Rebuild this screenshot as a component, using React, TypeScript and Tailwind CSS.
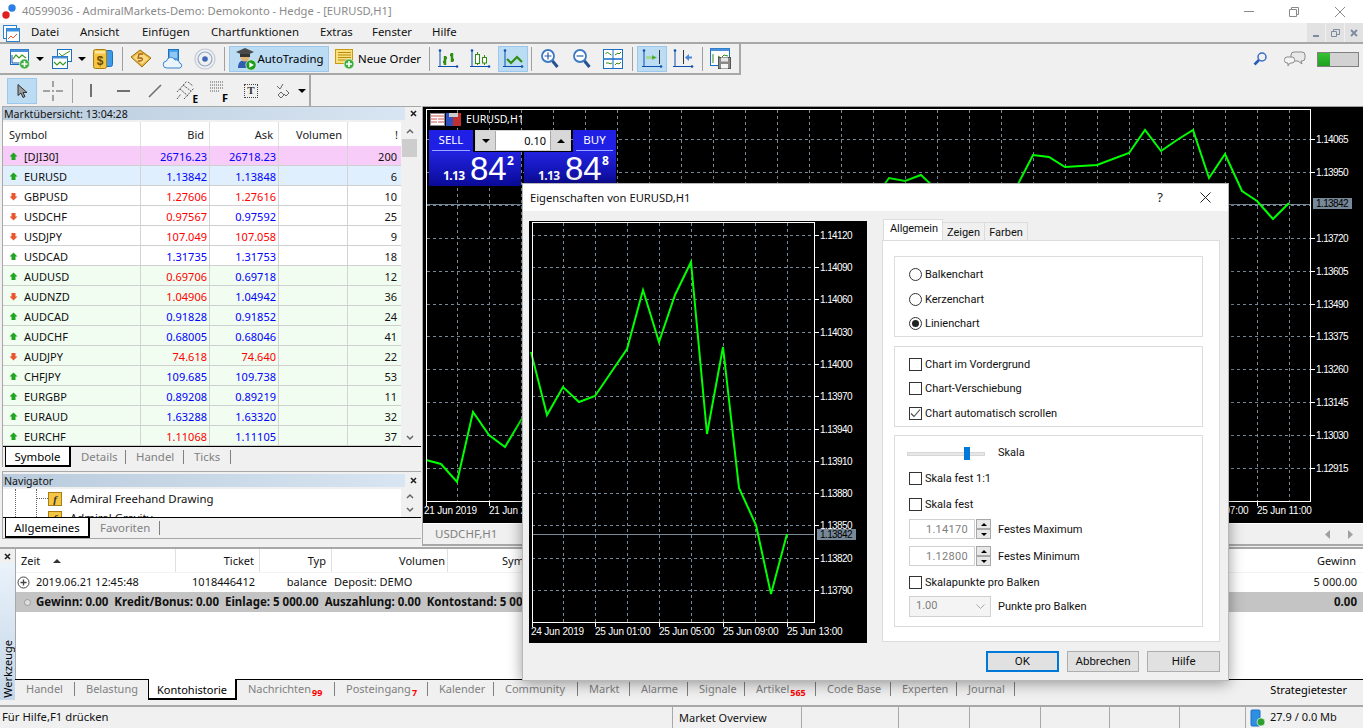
import type { ReactNode } from 'react'

const marketRows = [
  { s: '[DJI30]', up: true, bid: '26716.23', bc: 'b', ask: '26718.23', ac: 'b', n: 200, bg: 'bg-[#f8ccf8]' },
  { s: 'EURUSD', up: true, bid: '1.13842', bc: 'b', ask: '1.13848', ac: 'b', n: 6, bg: 'bg-[#dfeffd]' },
  { s: 'GBPUSD', up: false, bid: '1.27606', bc: 'r', ask: '1.27616', ac: 'r', n: 10, bg: 'bg-white' },
  { s: 'USDCHF', up: false, bid: '0.97567', bc: 'r', ask: '0.97592', ac: 'b', n: 25, bg: 'bg-white' },
  { s: 'USDJPY', up: false, bid: '107.049', bc: 'r', ask: '107.058', ac: 'r', n: 9, bg: 'bg-white' },
  { s: 'USDCAD', up: true, bid: '1.31735', bc: 'b', ask: '1.31753', ac: 'b', n: 18, bg: 'bg-white' },
  { s: 'AUDUSD', up: true, bid: '0.69706', bc: 'r', ask: '0.69718', ac: 'b', n: 12, bg: 'bg-[#f0fdf0]' },
  { s: 'AUDNZD', up: false, bid: '1.04906', bc: 'r', ask: '1.04942', ac: 'b', n: 36, bg: 'bg-[#f0fdf0]' },
  { s: 'AUDCAD', up: true, bid: '0.91828', bc: 'b', ask: '0.91852', ac: 'b', n: 24, bg: 'bg-[#f0fdf0]' },
  { s: 'AUDCHF', up: true, bid: '0.68005', bc: 'b', ask: '0.68046', ac: 'b', n: 41, bg: 'bg-[#f0fdf0]' },
  { s: 'AUDJPY', up: false, bid: '74.618', bc: 'r', ask: '74.640', ac: 'r', n: 22, bg: 'bg-[#f0fdf0]' },
  { s: 'CHFJPY', up: true, bid: '109.685', bc: 'b', ask: '109.738', ac: 'b', n: 53, bg: 'bg-[#f0fdf0]' },
  { s: 'EURGBP', up: true, bid: '0.89208', bc: 'b', ask: '0.89219', ac: 'b', n: 11, bg: 'bg-[#f0fdf0]' },
  { s: 'EURAUD', up: true, bid: '1.63288', bc: 'b', ask: '1.63320', ac: 'b', n: 32, bg: 'bg-[#f0fdf0]' },
  { s: 'EURCHF', up: true, bid: '1.11068', bc: 'r', ask: '1.11105', ac: 'b', n: 37, bg: 'bg-[#f0fdf0]' },
]

const menuItems = [
  { t: 'Datei', w: 'w-[49px]' },
  { t: 'Ansicht', w: 'w-[62px]' },
  { t: 'Einfügen', w: 'w-[69px]' },
  { t: 'Chartfunktionen', w: 'w-[109px]' },
  { t: 'Extras', w: 'w-[52px]' },
  { t: 'Fenster', w: 'w-[60px]' },
  { t: 'Hilfe', w: 'w-[40px]' },
]

const terminalTabs = [
  { t: 'Handel', w: 'w-[60px]', sep: true },
  { t: 'Belastung', w: 'w-[73px]', sep: false },
  { t: 'Kontohistorie', w: 'w-[89px]', active: true, sep: false },
  { t: 'Nachrichten', w: 'w-[98px]', sep: true, badge: '99' },
  { t: 'Posteingang', w: 'w-[93px]', sep: true, badge: '7' },
  { t: 'Kalender', w: 'w-[66px]', sep: true },
  { t: 'Community', w: 'w-[84px]', sep: true },
  { t: 'Markt', w: 'w-[52px]', sep: true },
  { t: 'Alarme', w: 'w-[58px]', sep: true },
  { t: 'Signale', w: 'w-[57px]', sep: true },
  { t: 'Artikel', w: 'w-[71px]', sep: true, badge: '565' },
  { t: 'Code Base', w: 'w-[75px]', sep: true },
  { t: 'Experten', w: 'w-[66px]', sep: true },
  { t: 'Journal', w: 'w-[58px]', sep: true },
]

const mainPrices = [
  [139, '1.14065'], [172, '1.13950'], [238, '1.13720'], [271, '1.13605'], [304, '1.13490'],
  [336, '1.13375'], [369, '1.13260'], [402, '1.13145'], [435, '1.13030'], [468, '1.12915'],
] as const

const dlgPrices = [
  [235, '1.14120'], [267, '1.14090'], [299, '1.14060'], [332, '1.14030'], [364, '1.14000'], [396, '1.13970'],
  [429, '1.13940'], [461, '1.13910'], [493, '1.13880'], [525, '1.13850'], [558, '1.13820'], [590, '1.13790'],
] as const

const mainVerticals = Array.from({ length: 27 }, (_, i) => 457 + i * 32)
const dlgVerticals = [563, 595, 627, 659, 691, 723, 755, 787]

function Axes({ children }: { children?: ReactNode }) {
  return (
    <svg width="22" height="20" viewBox="0 0 22 20">
      <path d="M3 1v17M1 17.5h19" stroke="#0a4fb0" strokeWidth="1" fill="none" />
      <circle cx="3" cy="1.5" r="1.3" fill="#0a4fb0" />
      <circle cx="20" cy="17.5" r="1.3" fill="#0a4fb0" />
      {children}
    </svg>
  )
}

function PlusBadge({ x, y }: { x: number; y: number }) {
  return (
    <g>
      <circle cx={x} cy={y} r="5" fill="#3fae3f" stroke="#dff3df" strokeWidth="0.7" />
      <path d={`M${x - 3} ${y}h6M${x} ${y - 3}v6`} stroke="#fff" strokeWidth="1.6" />
    </g>
  )
}

function NewChartIcon() {
  return (
    <svg width="22" height="22" viewBox="0 0 22 22">
      <rect x="1.5" y="1.5" width="18" height="15" fill="#fff" stroke="#1b6fc2" />
      <rect x="1.5" y="1.5" width="18" height="2.5" fill="#4a90d9" />
      <path d="M3 7v8h13" stroke="#0a4fb0" fill="none" />
      <path d="M4 11l3-4 3 3 3-3 4 3" stroke="#3a9a1a" fill="none" strokeWidth="1.2" />
      <PlusBadge x={15.5} y={16} />
    </svg>
  )
}

function ProfilesIcon() {
  return (
    <svg width="22" height="22" viewBox="0 0 22 22">
      <rect x="6.5" y="1.5" width="14" height="12" fill="#fff" stroke="#1b6fc2" />
      <path d="M8 5l3 3 3-2 5-3" stroke="#3a9a1a" fill="none" />
      <rect x="1.5" y="8.5" width="15" height="12" fill="#fff" stroke="#1b6fc2" />
      <rect x="1.5" y="8.5" width="15" height="2" fill="#4a90d9" />
      <path d="M3 14l3 3 3-3 3 3 3-3" stroke="#3a9a1a" fill="none" strokeWidth="1.2" />
    </svg>
  )
}

function DollarIcon() {
  return (
    <svg width="22" height="22" viewBox="0 0 22 22">
      <rect x="7.5" y="2.5" width="13" height="16" rx="2" fill="#3d9be9" stroke="#1b6fc2" />
      <rect x="1.5" y="1.5" width="13" height="19" rx="2" fill="#f4c542" stroke="#a87e10" />
      <rect x="3" y="3" width="10" height="2.5" fill="#fbe7a2" />
      <text x="8" y="17" textAnchor="middle" fontSize="12" fontWeight="700" fill="#6b4c00" fontFamily="Liberation Sans">$</text>
    </svg>
  )
}

function BookIcon() {
  return (
    <svg width="22" height="20" viewBox="0 0 22 20">
      <path d="M1 8L10 1l11 8-9 9z" fill="#e8b034" stroke="#9c7416" />
      <path d="M3 8.5l7-5.5 9 6.5-7 6z" fill="#f7da84" />
      <path d="M13 5H9l-1 4h3c2 0 2 3-1 3H8" stroke="#a8601a" strokeWidth="1.3" fill="none" />
    </svg>
  )
}

function CloudDocIcon() {
  return (
    <svg width="22" height="22" viewBox="0 0 22 22">
      <rect x="6.5" y="1.5" width="10" height="12" fill="#4aa3e8" stroke="#1b6fc2" />
      <path d="M8 5h7M8 7h7M8 9h7" stroke="#d8ecfb" />
      <path d="M5 20a3.5 3.5 0 0 1-.5-7 4.5 4.5 0 0 1 8.5-1 3.5 3.5 0 0 1 4.5 3 2.6 2.6 0 0 1 .5 5z" fill="#eaf4fc" stroke="#3b82c8" />
    </svg>
  )
}

function SignalIcon() {
  return (
    <svg width="22" height="22" viewBox="0 0 22 22" fill="none">
      <circle cx="11" cy="11" r="10" stroke="#c3cbd6" strokeWidth="1.2" />
      <circle cx="11" cy="11" r="7" stroke="#8fa6c7" strokeWidth="1.2" />
      <circle cx="11" cy="11" r="2.8" fill="#3b68b8" />
    </svg>
  )
}

function AutoTradingIcon() {
  return (
    <svg width="22" height="24" viewBox="0 0 22 24">
      <path d="M3 21c0-6 3-8 7-8s7 2 7 8z" fill="#2f5fae" />
      <circle cx="10" cy="10" r="4.5" fill="#e5b27a" />
      <path d="M1 5l9-4 9 4-9 4z" fill="#4a4a4a" />
      <path d="M5 7v3h10V7" fill="#333" />
      <circle cx="16" cy="18" r="5.2" fill="#1f9d1f" stroke="#e6f5e6" strokeWidth="0.7" />
      <path d="M14.3 15.2v5.6l4.6-2.8z" fill="#fff" />
    </svg>
  )
}

function OrderIcon() {
  return (
    <svg className="shrink-0" width="22" height="22" viewBox="0 0 22 22">
      <rect x="1.5" y="1.5" width="17" height="14" fill="#f9e07c" stroke="#c79a12" />
      <path d="M4 4.5h13M4 7h13M4 9.5h13M4 12h9" stroke="#b88c10" />
      <PlusBadge x={15} y={16} />
    </svg>
  )
}

function BarChartIcon() {
  return (
    <Axes>
      <path d="M8 7v9M6 13h2M8 9h2M15 4v9M13 6h2M15 11h2" stroke="#2f8f10" strokeWidth="2.4" fill="none" />
    </Axes>
  )
}

function CandleIcon() {
  return (
    <Axes>
      <rect x="6.5" y="5.5" width="4" height="9" fill="#fff" stroke="#2f8f10" />
      <path d="M8.5 3v2M8.5 15v1M15.5 6v2M15.5 14v2" stroke="#2f8f10" />
      <rect x="13.5" y="8.5" width="4" height="5.5" fill="#fff" stroke="#2f8f10" />
    </Axes>
  )
}

function LineIcon() {
  return (
    <Axes>
      <path d="M5 10l4 4 6-6 5 5" stroke="#2f8f10" strokeWidth="2.2" fill="none" />
    </Axes>
  )
}

function ZoomIcon({ plus }: { plus?: boolean }) {
  return (
    <svg width="20" height="22" viewBox="0 0 20 22" fill="none">
      <circle cx="9" cy="8" r="6" fill="#fff" stroke="#3a78c4" strokeWidth="1.8" />
      <path d={plus ? 'M5.500 8h7M9 4.500v7' : 'M5.500 8h7'} stroke="#2a5da8" strokeWidth="1.2" />
      <path d="M13.500 13l5 6" stroke="#24508f" strokeWidth="3" />
    </svg>
  )
}

function TileIcon() {
  return (
    <svg width="20" height="20" viewBox="0 0 20 20" fill="none">
      <rect x="0.5" y="0.5" width="19" height="19" fill="#fff" stroke="#1b6fc2" />
      <rect x="0.5" y="9" width="19" height="2" fill="#4a90d9" />
      <path d="M10 0v20" stroke="#1b6fc2" />
      <path d="M2.5 5l2-2 2 2 2 1M12 6l3-2 1 1 2-2M3 14h3l1 1 2-1M12 16l2-2 2 1 2-2" stroke="#2f8f10" />
    </svg>
  )
}

function AutoScrollIcon() {
  return (
    <Axes>
      <rect x="5" y="7" width="6" height="3" fill="#a3d89a" />
      <path d="M11 6l0 5 5-2.5z" fill="#5cb84c" />
      <path d="M11 8.5h3" stroke="#3d9a2b" />
      <path d="M18.5 1v14" stroke="#333" />
    </Axes>
  )
}

function ChartShiftIcon() {
  return (
    <Axes>
      <path d="M11.5 1v14" stroke="#333" />
      <path d="M20 7.5h-3V5l-4 3.5 4 3.5V9.5h3z" fill="#4a86d8" />
    </Axes>
  )
}

function TemplateIcon() {
  return (
    <svg width="22" height="22" viewBox="0 0 22 22" fill="none">
      <rect x="0.5" y="0.5" width="19" height="17" fill="#fff" stroke="#1b6fc2" />
      <rect x="0.5" y="0.5" width="19" height="2.5" fill="#4a90d9" />
      <path d="M3 6v9M8 8l3 2 3-3 4 1" stroke="#2f8f10" />
      <rect x="8.5" y="9.5" width="12" height="11" fill="#8a8a8a" stroke="#555" />
      <rect x="11" y="9.5" width="7" height="4" fill="#e5e5e5" />
      <rect x="11" y="16" width="7" height="4.500" fill="#f5f5f5" />
    </svg>
  )
}

function Arrow({ up }: { up: boolean }) {
  return (
    <svg width="9" height="9" viewBox="0 0 9 9">
      {up ? <path d="M4.5.5L8.500 4.500H6.500V8h-4V4.500H.5z" fill="#1fa51f" /> : <path d="M4.500 8.500L8.500 4.500H6.500V1h-4v3.500H.5z" fill="#e8562e" />}
    </svg>
  )
}

function Caret() {
  return <div className="w-0 h-0 border-l-[4px] border-r-[4px] border-t-[4px] border-l-transparent border-r-transparent border-t-black" />
}

function Sep() {
  return <div className="w-px h-[24px] bg-[#a0a0a0] shrink-0" />
}

function Slot({ children, w = 'w-8' }: { children?: ReactNode; w?: string }) {
  return <div className={`${w} h-[26px] flex items-center justify-center shrink-0`}>{children}</div>
}

function Active({ children, w = 'w-[30px]', ml = '' }: { children?: ReactNode; w?: string; ml?: string }) {
  return (
    <div className={`${w} ${ml} h-[26px] flex items-center justify-center shrink-0 bg-[#bcdcf4] border border-[#9cc8ee]`}>
      {children}
    </div>
  )
}

function Toolbars() {
  return (
    <div className="flex flex-col">
      <div className="h-[31px] w-[741px] flex items-center border-b-2 border-r-2 border-[#a8a8a8]">
        <Slot w="w-7 ml-[6px]"><NewChartIcon /></Slot>
        <Slot w="w-3"><Caret /></Slot>
        <Slot w="w-7 ml-[2px]"><ProfilesIcon /></Slot>
        <Slot w="w-3"><Caret /></Slot>
        <Slot w="w-7 ml-[1px]"><DollarIcon /></Slot>
        <div className="ml-[5px] shrink-0"><Sep /></div>
        <Slot w="w-8 ml-[2px]"><BookIcon /></Slot>
        <Slot><CloudDocIcon /></Slot>
        <Slot><SignalIcon /></Slot>
        <div className="ml-[3px] shrink-0"><Sep /></div>
        <Active w="w-[100px]" ml="ml-[4px]">
          <AutoTradingIcon />
          <span className="ml-[1px] text-[11.4px] text-black whitespace-nowrap">AutoTrading</span>
        </Active>
        <div className="ml-[5px] flex items-center w-[87px] shrink-0">
          <OrderIcon />
          <span className="ml-[2px] text-[11.4px] text-black whitespace-nowrap">Neue Order</span>
        </div>
        <div className="ml-[8px] shrink-0"><Sep /></div>
        <Slot w="w-8 ml-[2px]"><BarChartIcon /></Slot>
        <Slot><CandleIcon /></Slot>
        <Active ml="ml-[2px]"><LineIcon /></Active>
        <div className="ml-[3px] shrink-0"><Sep /></div>
        <Slot w="w-8 ml-[1px]"><ZoomIcon plus /></Slot>
        <Slot><ZoomIcon /></Slot>
        <Slot><TileIcon /></Slot>
        <div className="ml-[3px] shrink-0"><Sep /></div>
        <Active ml="ml-[4px]"><AutoScrollIcon /></Active>
        <Slot><ChartShiftIcon /></Slot>
        <div className="ml-[3px] shrink-0"><Sep /></div>
        <Slot w="w-8 ml-[2px]"><TemplateIcon /></Slot>
      </div>
      <div className="h-[31px] w-[311px] flex items-center border-r-2 border-[#a8a8a8]">
        <Active ml="ml-[7px]">
          <svg width="14" height="16" viewBox="0 0 14 16"><path d="M3 1.5v11l3-2.5 2 4.5 2-1-2-4h4z" fill="#9a9a9a" stroke="#333" /></svg>
        </Active>
        <Slot>
          <svg width="20" height="20" viewBox="0 0 20 20"><path d="M10 0v6M10 9v2M10 14v6M0 10h7M13 10h7" stroke="#555" /></svg>
        </Slot>
        <div className="ml-[3px] shrink-0"><Sep /></div>
        <Slot w="w-8 ml-[2px]"><div className="w-[2px] h-[13px] bg-[#707070]" /></Slot>
        <Slot><div className="w-[13px] h-[2px] bg-[#707070]" /></Slot>
        <Slot>
          <svg width="14" height="14" viewBox="0 0 14 14"><path d="M1 13L13 1" stroke="#707070" strokeWidth="1.6" /></svg>
        </Slot>
        <Slot>
          <div className="relative w-[22px] h-[22px]">
            <svg width="20" height="20" viewBox="0 0 20 20" fill="none"><path d="M1 19l4-5M1 12l10-11M8 19l10-11M4 9l8 7M7 5l8 6M12 2l5 4" stroke="#555" strokeDasharray="2 1" /></svg>
            <span className="absolute right-0 bottom-[-2px] text-[10px] leading-none font-bold text-black">E</span>
          </div>
        </Slot>
        <Slot>
          <div className="relative w-[18px] h-[20px]">
            <svg width="14" height="14" viewBox="0 0 14 14" fill="none"><path d="M0 1h13M0 4h13M0 7h13M0 10h9" stroke="#555" strokeDasharray="1 1" /></svg>
            <span className="absolute right-0 bottom-[-2px] text-[11px] leading-none font-bold text-black">F</span>
          </div>
        </Slot>
        <Slot>
          <div className="w-[14px] h-[14px] border border-dotted border-[#444] flex items-center justify-center text-[11px] leading-none font-bold font-['Liberation_Serif',serif] text-[#333]">T</div>
        </Slot>
        <Slot>
          <svg width="14" height="16" viewBox="0 0 14 16" fill="none"><path d="M1 3l3 3 3-5M5 9l3 3-3 3-3-3zM10 7l3 3-3 3-2-2" stroke="#666" /></svg>
        </Slot>
        <Slot w="w-[6px]"><Caret /></Slot>
      </div>
    </div>
  )
}

function PanelTitle({ title }: { title: string }) {
  return (
    <div className="h-[15px] flex items-start shrink-0">
      <div className="flex-1 h-[13px] bg-gradient-to-r from-[#b9cbdc] to-[#d8e5f2] pl-[1px] text-[10.6px] leading-[14px] text-[#111]">{title}</div>
      <div className="w-[16px] h-[13px] flex items-center justify-center">
        <svg width="7" height="7" viewBox="0 0 7 7"><path d="M1 1l5 5M6 1L1 6" stroke="#222" strokeWidth="1.6" /></svg>
      </div>
    </div>
  )
}

function PanelTabs({ active, activeW, items }: { active: string; activeW: string; items: { t: string; w: string }[] }) {
  return (
    <div className="h-[21px] flex border-t border-black pl-[2px] text-[11.4px] shrink-0">
      <div className={`${activeW} h-[20px] bg-white border-l border-r-2 border-b-2 border-black text-center leading-[19px] text-black`}>{active}</div>
      {items.map((it) => (
        <div key={it.t} className={`${it.w} h-[14px] mt-[3px] pl-[10px] leading-[14px] border-r border-[#808080] text-[#808080]`}>{it.t}</div>
      ))}
    </div>
  )
}

function ScrollArrow({ up }: { up: boolean }) {
  return (
    <svg width="8" height="6" viewBox="0 0 8 6" fill="none">
      <path d={up ? 'M1 5l3-3 3 3' : 'M1 1l3 3 3-3'} stroke="#666" strokeWidth="1.5" />
    </svg>
  )
}

function MarketWatch() {
  const color = (c: string) => (c === 'b' ? 'text-[#0000ff]' : 'text-[#ff0000]')
  return (
    <div className="ml-[2px] mr-[1px] flex flex-col border-l border-t border-[#a8a8a8]">
      <PanelTitle title="Marktübersicht: 13:04:28" />
      <div className="flex h-[324px]">
        <div className="w-[398px] text-[11px]">
          <div className="h-[24px] flex bg-white leading-[26px] text-[#222]">
            <div className="w-[138px] pl-[6px] border-r border-[#e0e0e0]">Symbol</div>
            <div className="w-[69px] pr-[5px] text-right border-r border-[#e0e0e0]">Bid</div>
            <div className="w-[69px] pr-[5px] text-right border-r border-[#e0e0e0]">Ask</div>
            <div className="w-[69px] pr-[5px] text-right border-r border-[#e0e0e0]">Volumen</div>
            <div className="w-[53px] pr-[3px] text-right">!</div>
          </div>
          {marketRows.map((r) => (
            <div key={r.s} className={`h-[20px] flex leading-[21px] border-b border-[#cfcfcf] ${r.bg}`}>
              <div className="w-[138px] flex items-center pl-[6px] pt-[2px] border-r border-[#d4d4d4] text-[#111]">
                <Arrow up={r.up} />
                <span className="ml-[6px] leading-[15px]">{r.s}</span>
              </div>
              <div className={`w-[69px] pr-[2px] text-right border-r border-[#d4d4d4] ${color(r.bc)}`}>{r.bid}</div>
              <div className={`w-[69px] pr-[2px] text-right border-r border-[#d4d4d4] ${color(r.ac)}`}>{r.ask}</div>
              <div className="w-[69px] border-r border-[#d4d4d4]" />
              <div className="w-[53px] pr-[4px] text-right text-[#111]">{r.n}</div>
            </div>
          ))}
        </div>
        <div className="w-[17px] flex flex-col items-center bg-[#f0f0f0]">
          <div className="h-[17px] flex items-center"><ScrollArrow up /></div>
          <div className="w-[15px] h-[18px] bg-[#cdcdcd]" />
          <div className="flex-1" />
          <div className="h-[17px] flex items-center"><ScrollArrow up={false} /></div>
        </div>
      </div>
      <PanelTabs
        active="Symbole"
        activeW="w-[66px]"
        items={[
          { t: 'Details', w: 'w-[55px]' },
          { t: 'Handel', w: 'w-[58px]' },
          { t: 'Ticks', w: 'w-[47px]' },
        ]}
      />
    </div>
  )
}

function Navigator() {
  return (
    <div className="mt-[4px] ml-[2px] mr-[1px] flex flex-col border-l border-t border-b border-[#a8a8a8] pt-[2px]">
      <PanelTitle title="Navigator" />
      <div className="flex h-[28px] overflow-hidden">
        <div className="w-[398px] bg-white text-[11.4px] relative overflow-hidden">
          <div className="absolute left-[12px] top-0 h-[28px] border-l border-dotted border-[#666]" />
          <div className="absolute left-[33px] top-0 h-[28px] border-l border-dotted border-[#666]" />
          {['Admiral Freehand Drawing', 'Admiral Gravity'].map((t) => (
            <div key={t} className="h-[19px] flex items-center pl-[33px]">
              <div className="w-[12px] border-t border-dotted border-[#666]" />
              <div className="w-[14px] h-[14px] bg-[#f4c542] border border-[#a87e10] text-[11px] leading-[12px] text-center italic font-bold font-['Liberation_Serif',serif] text-[#333]">f</div>
              <span className="ml-[8px] text-[#111]">{t}</span>
            </div>
          ))}
        </div>
        <div className="w-[17px] flex flex-col items-center justify-around bg-[#f0f0f0]">
          <ScrollArrow up />
          <ScrollArrow up={false} />
        </div>
      </div>
      <PanelTabs
        active="Allgemeines"
        activeW="w-[85px]"
        items={[{ t: 'Favoriten', w: 'w-[70px]' }]}
      />
    </div>
  )
}

function MainChart() {
  return (
    <svg className="block shrink-0 font-['Liberation_Sans',sans-serif]" width="940" height="416" viewBox="423 107 940 416">
      <rect x="423" y="107" width="940" height="416" fill="#000" />
      <g stroke="#778899" strokeDasharray="3 3" fill="none">
        {[...mainPrices.map((p) => p[0]), 205].map((y) => (
          <path key={y} d={`M427 ${y + 0.5}H1310`} />
        ))}
        {mainVerticals.map((x) => (
          <path key={x} d={`M${x + 0.5} 110V501`} />
        ))}
      </g>
      <path d="M427 204.5H1310" stroke="#778899" />
      <polyline
        fill="none"
        stroke="#00ff00"
        strokeWidth="2"
        points="426,460 441,464 457,482 473,412 489,435 505,447 521,420 600,400 800,300 873,200 889,178 905,181 921,175 937,190 1000,210 1017,186 1033,155 1049,157 1065,167 1097,165 1129,153 1145,130 1161,151 1177,140 1193,130 1209,178 1225,154 1242,191 1257,201 1273,219 1289,203"
      />
      <rect x="426.5" y="109.5" width="884" height="392" fill="none" stroke="#fff" />
      <g stroke="#fff">
        {mainPrices.map(([y]) => (
          <path key={y} d={`M1310 ${y + 0.5}h5`} />
        ))}
        {[426, 489, 1193, 1257].map((x) => (
          <path key={x} d={`M${x + 0.5} 501v5`} />
        ))}
      </g>
      <g fill="#fff" fontSize="10" letterSpacing="-0.6">
        {mainPrices.map(([y, t]) => (
          <text key={t} x="1316" y={y + 4}>{t}</text>
        ))}
      </g>
      <g fill="#fff" fontSize="10" letterSpacing="-0.2">
        <text x="424" y="514">21 Jun 2019</text>
        <text x="489" y="514">21 Jun 21:00</text>
        <text x="1193" y="514">25 Jun 07:00</text>
        <text x="1257" y="514">25 Jun 11:00</text>
      </g>
      <rect x="1313" y="198" width="39" height="11" fill="#778899" />
      <text x="1316" y="207" fontSize="10" letterSpacing="-0.6" fill="#000">1.13842</text>
    </svg>
  )
}

function DialogChart() {
  return (
    <svg className="block mt-[1px] shrink-0 font-['Liberation_Sans',sans-serif]" width="338" height="422" viewBox="529 221 338 422">
      <rect x="529" y="221" width="338" height="422" fill="#000" />
      <g stroke="#778899" strokeDasharray="3 3" fill="none">
        {dlgPrices.map(([y]) => (
          <path key={y} d={`M532 ${y + 0.5}H814`} />
        ))}
        {dlgVerticals.map((x) => (
          <path key={x} d={`M${x + 0.5} 223V622`} />
        ))}
      </g>
      <path d="M532 534.5H814" stroke="#778899" />
      <polyline
        fill="none"
        stroke="#00ff00"
        strokeWidth="2"
        points="531,352 547,415 563,387 579,402 595,396 627,349 643,290 659,342 675,295 691,262 707,434 723,347 739,488 756,525 771,594 787,534"
      />
      <rect x="532.5" y="222.5" width="282" height="400" fill="none" stroke="#fff" />
      <g stroke="#fff">
        {dlgPrices.map(([y]) => (
          <path key={y} d={`M814 ${y + 0.5}h5`} />
        ))}
        {[532, 595, 659, 723, 787].map((x) => (
          <path key={x} d={`M${x + 0.5} 622v5`} />
        ))}
      </g>
      <g fill="#fff" fontSize="10" letterSpacing="-0.6">
        {dlgPrices.map(([y, t]) => (
          <text key={t} x="820" y={y + 4}>{t}</text>
        ))}
      </g>
      <g fill="#fff" fontSize="10" letterSpacing="-0.2">
        <text x="531" y="635">24 Jun 2019</text>
        <text x="595" y="635">25 Jun 01:00</text>
        <text x="659" y="635">25 Jun 05:00</text>
        <text x="723" y="635">25 Jun 09:00</text>
        <text x="787" y="635">25 Jun 13:00</text>
      </g>
      <rect x="817" y="529" width="39" height="11" fill="#778899" />
      <text x="820" y="538" fontSize="10" letterSpacing="-0.6" fill="#000">1.13842</text>
    </svg>
  )
}

function OneClick() {
  return (
    <div className="absolute left-[6px] top-[24px] w-[187px] text-white">
      <div className="flex h-[22px]">
        <div className="w-[44px] bg-[#1f1fe6] text-center text-[11.5px] leading-[20px]">
          SELL
          <div className="mx-[3px] border-b border-[#9ea6ff]" />
        </div>
        <div className="ml-[2px] w-[96px] h-[21px] flex border border-[#d0d0d0] bg-[#d8d8d8] text-black text-[11px]">
          <div className="w-[19px] flex items-center justify-center"><Caret /></div>
          <div className="flex-1 bg-white text-right pr-[4px] leading-[19px] border-x border-[#a8a8a8]">0.10</div>
          <div className="w-[19px] flex items-center justify-center"><div className="w-0 h-0 border-l-[4px] border-r-[4px] border-b-[4px] border-l-transparent border-r-transparent border-b-black" /></div>
        </div>
        <div className="ml-[2px] w-[43px] bg-[#1f1fe6] text-center text-[11.5px] leading-[20px]">
          BUY
          <div className="mx-[3px] border-b border-[#9ea6ff]" />
        </div>
      </div>
      <div className="flex gap-[3px]">
        {[['84', '2'], ['84', '8']].map(([big, small], i) => (
          <div key={i} className="w-[92px] h-[34px] pl-[14px] bg-gradient-to-b from-[#2222e0] to-[#0a0a98] flex items-end leading-none">
            <span className="w-[27px] text-[12px] tracking-[-0.6px] font-bold mb-[4px]">1.13</span>
            <span className="w-[37px] text-[33px] font-['Liberation_Sans',sans-serif] leading-[34px]">{big}</span>
            <span className="text-[12px] font-bold mb-[19px]">{small}</span>
          </div>
        ))}
      </div>
    </div>
  )
}

function Radio({ label, checked, mt = '' }: { label: string; checked?: boolean; mt?: string }) {
  return (
    <div className={`flex items-center h-[16px] ${mt}`}>
      <div className="w-[13px] h-[13px] rounded-full border border-[#333] flex items-center justify-center bg-white">
        {checked && <div className="w-[7px] h-[7px] rounded-full bg-[#222]" />}
      </div>
      <span className="ml-[3px] pt-[2px]">{label}</span>
    </div>
  )
}

function Check({ label, checked, mt = '' }: { label: string; checked?: boolean; mt?: string }) {
  return (
    <div className={`flex items-center h-[16px] ${mt}`}>
      <div className="w-[13px] h-[13px] border border-[#333] bg-white flex items-center justify-center">
        {checked && (
          <svg width="11" height="11" viewBox="0 0 11 11" fill="none"><path d="M1 5.5l3 3 6-7" stroke="#444" strokeWidth="1.1" /></svg>
        )}
      </div>
      <span className="ml-[3px] pt-[2px]">{label}</span>
    </div>
  )
}

function Spin({ value, label }: { value: string; label: string }) {
  return (
    <div className="flex items-center h-[20px]">
      <div className="w-[66px] h-[20px] border border-[#d0d0d0] bg-white text-right pr-[6px] leading-[19px] text-[#808080] tracking-[0.3px]">{value}</div>
      <div className="ml-[1px] w-[15px] h-[20px] flex flex-col">
        <div className="flex-1 border border-[#a8a8a8] bg-[#e8e8e8] flex items-center justify-center">
          <div className="w-0 h-0 border-l-[3px] border-r-[3px] border-b-[3px] border-l-transparent border-r-transparent border-b-black" />
        </div>
        <div className="flex-1 border border-[#a8a8a8] bg-[#e8e8e8] flex items-center justify-center">
          <div className="w-0 h-0 border-l-[3px] border-r-[3px] border-t-[3px] border-l-transparent border-r-transparent border-t-black" />
        </div>
      </div>
      <span className="ml-[7px] pt-[2px]">{label}</span>
    </div>
  )
}

function DlgButton({ label, primary }: { label: string; primary?: boolean }) {
  return (
    <div className={`w-[73px] h-[21px] bg-[#e1e1e1] text-center text-[11.5px] ${primary ? 'border-2 border-[#0078d7] leading-[17px]' : 'border border-[#adadad] leading-[19px]'}`}>
      {label}
    </div>
  )
}

function PropsDialog() {
  return (
    <div className="absolute left-[522px] top-[183px] w-[707px] h-[498px] bg-[#f0f0f0] border border-[#b8b8b8] shadow-[0_2px_14px_rgba(0,0,0,0.4)] flex flex-col z-10">
      <div className="h-[27px] bg-white flex items-center shrink-0">
        <span className="ml-[7px] pt-[2px] text-[11.2px] text-[#111]">Eigenschaften von EURUSD,H1</span>
        <span className="ml-auto mr-[37px] text-[13px] text-[#222]">?</span>
        <svg className="mr-[17px]" width="11" height="11" viewBox="0 0 11 11"><path d="M.5.5l10 10M10.5.5l-10 10" stroke="#222" /></svg>
      </div>
      <div className="flex flex-1 pt-[9px] pl-[6px]">
        <DialogChart />
        <div className="ml-[15px] w-[338px] flex flex-col text-[11px] text-[#111] font-['Roboto',sans-serif]">
          <div className="flex h-[20px] pl-[1px] items-end relative z-10">
            <div className="w-[60px] h-[21px] bg-white border border-b-0 border-[#dcdcdc] pl-[6px] leading-[18px] tracking-[-0.1px]">Allgemein</div>
            <div className="w-[42px] h-[18px] bg-[#f0f0f0] border border-l-0 border-b-0 border-[#dcdcdc] text-center leading-[19px]">Zeigen</div>
            <div className="w-[43px] h-[18px] bg-[#f0f0f0] border border-l-0 border-b-0 border-[#dcdcdc] text-center leading-[19px]">Farben</div>
          </div>
          <div className="h-[402px] bg-white border border-[#dcdcdc] pt-[15px] pl-[11px] flex flex-col">
            <div className="w-[309px] h-[81px] border border-[#dcdcdc] pl-[14px] pt-[9px] flex flex-col shrink-0">
              <Radio label="Balkenchart" />
              <Radio label="Kerzenchart" mt="mt-[9px]" />
              <Radio label="Linienchart" mt="mt-[8px]" checked />
            </div>
            <div className="mt-[9px] w-[309px] h-[81px] border border-[#dcdcdc] pl-[14px] pt-[9px] flex flex-col shrink-0">
              <Check label="Chart im Vordergrund" />
              <Check label="Chart-Verschiebung" mt="mt-[8px]" />
              <Check label="Chart automatisch scrollen" mt="mt-[9px]" checked />
            </div>
            <div className="mt-[8px] w-[309px] h-[192px] border border-[#dcdcdc] pl-[14px] pt-[8px] flex flex-col shrink-0">
              <div className="flex items-center h-[16px] ml-[-2px]">
                <div className="relative mt-[3px] w-[78px] h-[4px] bg-[#e7e7e7] border border-[#d6d6d6]">
                  <div className="absolute left-[56px] top-[-6px] w-[6px] h-[13px] bg-[#0078d7]" />
                </div>
                <span className="ml-[13px] pt-[2px]">Skala</span>
              </div>
              <Check label="Skala fest 1:1" mt="mt-[10px]" />
              <Check label="Skala fest" mt="mt-[10px]" />
              <div className="mt-[7px]"><Spin value="1.14170" label="Festes Maximum" /></div>
              <div className="mt-[7px]"><Spin value="1.12800" label="Festes Minimum" /></div>
              <Check label="Skalapunkte pro Balken" mt="mt-[8px]" />
              <div className="mt-[6px] flex items-center">
                <div className="w-[82px] h-[21px] border border-[#d0d0d0] bg-[#f4f4f4] flex items-center justify-between pl-[6px] pr-[5px] text-[#808080]">
                  1.00
                  <svg width="9" height="5" viewBox="0 0 9 5" fill="none"><path d="M.5.5l4 4 4-4" stroke="#a8a8a8" /></svg>
                </div>
                <span className="ml-[7px] pt-[2px]">Punkte pro Balken</span>
              </div>
            </div>
          </div>
          <div className="mt-[9px] flex gap-[8px] ml-[104px]">
            <DlgButton label="OK" primary />
            <DlgButton label="Abbrechen" />
            <DlgButton label="Hilfe" />
          </div>
        </div>
      </div>
    </div>
  )
}

function Terminal() {
  return (
    <div className="flex-1 flex mt-[1px] border-t-2 border-[#a8a8a8] min-h-0">
      <div className="w-[15px] flex flex-col shrink-0">
        <div className="h-[14px] flex items-center justify-center">
          <svg width="7" height="7" viewBox="0 0 7 7"><path d="M1 1l5 5M6 1L1 6" stroke="#222" strokeWidth="1.6" /></svg>
        </div>
        <div className="flex-1 bg-gradient-to-b from-[#eaf2fa] to-[#c4d6e8] flex items-end justify-center overflow-hidden">
          <span className="[writing-mode:vertical-rl] rotate-180 text-[11px] leading-[13px] text-black mb-[2px]">Werkzeuge</span>
        </div>
      </div>
      <div className="flex-1 flex flex-col min-w-0">
        <div className="flex-1 bg-white text-[11px] text-[#111] border-l border-[#a8a8a8]">
          <div className="h-[24px] flex leading-[24px] border-b border-[#f2f2f2]">
            <div className="w-[160px] pl-[5px] border-r border-[#e0e0e0] flex items-center gap-[13px]">
              Zeit
              <div className="w-0 h-0 border-l-[4px] border-r-[4px] border-b-[4px] border-l-transparent border-r-transparent border-b-[#333]" />
            </div>
            <div className="w-[84px] pr-[5px] text-right border-r border-[#e0e0e0]">Ticket</div>
            <div className="w-[72px] pr-[5px] text-right border-r border-[#e0e0e0]">Typ</div>
            <div className="w-[116px] pr-[2px] text-right border-r border-[#e0e0e0]">Volumen</div>
            <div className="flex-1 pl-[54px]">Symbol</div>
            <div className="w-[80px] pr-[7px] text-right">Gewinn</div>
          </div>
          <div className="h-[19px] flex items-center">
            <div className="w-[160px] flex items-center pl-[1px]">
              <svg width="13" height="13" viewBox="0 0 13 13" fill="none"><circle cx="6.5" cy="6.5" r="5.5" stroke="#444" /><path d="M3.5 6.5h6M6.5 3.5v6" stroke="#444" strokeWidth="1.3" /></svg>
              <span className="ml-[6px]">2019.06.21 12:45:48</span>
            </div>
            <div className="w-[84px] pr-[5px] text-right">1018446412</div>
            <div className="w-[72px] pr-[5px] text-right">balance</div>
            <div className="flex-1 pl-[2px]">Deposit: DEMO</div>
            <div className="pr-[6px]">5 000.00</div>
          </div>
          <div className="h-[20px] bg-[#c4c4c4] flex items-center text-[11.5px] font-bold whitespace-pre">
            <div className="w-[7px] h-[7px] rounded-full bg-[#e0e0e0] border border-[#999] ml-[8px] mr-[5px]" />
            <span>Gewinn: 0.00  Kredit/Bonus: 0.00  Einlage: 5 000.00  Auszahlung: 0.00  Kontostand: 5 000.00</span>
            <span className="ml-auto pr-[6px]">0.00</span>
          </div>
        </div>
        <div className="h-[21px] flex bg-[#f0f0f0] border-t border-black text-[11px] shrink-0">
          {terminalTabs.map((tab) =>
            tab.active ? (
              <div key={tab.t} className={`${tab.w} h-[21px] bg-white border-l border-r-2 border-b-2 border-black -mt-[1px] text-center leading-[21px] text-black`}>{tab.t}</div>
            ) : (
              <div key={tab.t} className={`${tab.w} h-[14px] mt-[2px] pl-[11px] leading-[14px] text-[#808080] whitespace-nowrap ${tab.sep ? 'border-r border-[#808080]' : ''}`}>
                {tab.t}
                {tab.badge && <span className="ml-[1px] text-[9px] font-bold leading-none text-[#ff0000] relative top-[3px]">{tab.badge}</span>}
              </div>
            ),
          )}
          <div className="ml-auto pr-[16px] leading-[19px] text-black">Strategietester</div>
        </div>
      </div>
    </div>
  )
}

export default function App() {
  return (
    <div className="relative w-[1363px] h-[728px] overflow-hidden flex flex-col bg-[#f0f0f0] font-['Noto_Sans',sans-serif]">
      {/* title bar */}
      <div className="h-[23px] bg-white flex items-center shrink-0">
        <svg className="ml-[2px]" width="16" height="18" viewBox="0 0 16 18">
          <circle cx="10" cy="5" r="3.7" fill="#2a7fe6" />
          <circle cx="4" cy="12" r="3.7" fill="#e02020" />
        </svg>
        <span className="ml-[4px] text-[11.2px] text-[#8a8a8a]">40599036 - AdmiralMarkets-Demo: Demokonto - Hedge - [EURUSD,H1]</span>
        <div className="ml-auto flex items-center">
          <div className="w-[10px] h-px bg-[#8a8a8a]" />
          <svg className="ml-[35px]" width="10" height="10" viewBox="0 0 10 10" fill="none"><path d="M.5 2.5h7v7h-7zM2.5 2.5v-2h7v7h-2" stroke="#8a8a8a" /></svg>
          <svg className="ml-[36px] mr-[18px]" width="10" height="10" viewBox="0 0 10 10"><path d="M0 0l10 10M10 0L0 10" stroke="#8a8a8a" /></svg>
        </div>
      </div>
      {/* menu bar */}
      <div className="h-[21px] flex items-center border-b-2 border-[#a8a8a8] shrink-0 relative">
        <svg className="ml-[3px]" width="17" height="18" viewBox="0 0 17 18">
          <rect x="0.5" y="1.5" width="13" height="13" fill="#fff" stroke="#2a82d0" />
          <rect x="3.5" y="4.5" width="13" height="13" fill="#fff" stroke="#2a82d0" />
          <rect x="3.5" y="4.5" width="13" height="3" fill="#3a90dd" />
          <path d="M5 15l3-3 2 2 4-4" stroke="#e0522a" fill="none" />
        </svg>
        <div className="ml-[11px] mb-[2px] flex text-[11.4px] text-[#111]">
          {menuItems.map((m) => (
            <div key={m.t} className={m.w}>{m.t}</div>
          ))}
        </div>
        <div className="ml-auto flex gap-px h-[19px]">
          {['min', 'max', 'close'].map((b) => (
            <div key={b} className="w-[18px] bg-[#e2e2e2] flex items-center justify-center">
              {b === 'min' && <div className="w-[6px] h-[2px] mt-[6px] bg-[#7c8ba0]" />}
              {b === 'max' && (
                <svg width="9" height="8" viewBox="0 0 9 8" fill="none"><path d="M.5 2.5h5v5h-5zM2.5 2.5v-2h6v5h-3" stroke="#7c8ba0" /></svg>
              )}
              {b === 'close' && (
                <svg width="8" height="8" viewBox="0 0 8 8"><path d="M1 1l6 6M7 1L1 7" stroke="#7c8ba0" strokeWidth="1.8" /></svg>
              )}
            </div>
          ))}
        </div>
      </div>
      {/* toolbars */}
      <div className="h-[62px] relative shrink-0">
        <Toolbars />
        <div className="absolute top-0 right-[4px] h-[30px] flex items-center">
          <svg width="14" height="14" viewBox="0 0 14 14" fill="none"><circle cx="9" cy="5" r="4" stroke="#3a6cc4" strokeWidth="1.5" /><path d="M6 8l-4.5 4.5" stroke="#2a5cb4" strokeWidth="2.6" /></svg>
          <svg className="ml-[17px]" width="22" height="16" viewBox="0 0 22 16"><path d="M10 1h8a3 3 0 0 1 3 3v3a3 3 0 0 1-3 3h-1l1 3-4-3h-4a3 3 0 0 1-3-3V4a3 3 0 0 1 3-3z" fill="#e8e8e8" stroke="#8a8a8a" /><path d="M3 6h5a2.5 2.5 0 0 1 2.5 2.5v1A2.5 2.5 0 0 1 8 12H6l-2 3v-3H3A2.5 2.5 0 0 1 .5 9.500v-1A2.500 2.500 0 0 1 3 6z" fill="#f4f4f4" stroke="#8a8a8a" /></svg>
          <div className="ml-[11px] w-[42px] h-[15px] border border-[#808080] bg-[#d2d2d2]">
            <div className="w-[12px] h-full bg-gradient-to-b from-[#34c234] to-[#1fa01f]" />
          </div>
        </div>
      </div>
      {/* middle */}
      <div className="h-[440px] flex shrink-0">
        <div className="w-[423px] flex flex-col shrink-0 border-r border-[#a8a8a8]">
          <MarketWatch />
          <Navigator />
        </div>
        <div className="flex-1 flex flex-col relative">
          <div className="h-px bg-[#a0a0a0] shrink-0" />
          <MainChart />
          <OneClick />
          <div className="absolute left-[7px] top-[7px] flex items-center gap-[1px]">
            <svg width="15" height="13" viewBox="0 0 15 13"><rect x="0.500" y="0.500" width="14" height="12" fill="#fff" stroke="#888" /><path d="M1 3h13M1 6h6M1 9h6M8 6h6M8 9h6" stroke="#d05050" /></svg>
            <svg width="15" height="13" viewBox="0 0 15 13"><rect x="0" y="0" width="7" height="13" fill="#3050c0" /><rect x="7" y="0" width="8" height="13" fill="#c03030" /><rect x="3" y="0" width="9" height="4" fill="#ccc" /></svg>
          </div>
          <span className="absolute left-[43px] top-[6px] text-[10.6px] leading-[14px] text-white">EURUSD,H1</span>
          <div className="flex-1 flex items-center bg-[#f0f0f0] border-t border-white border-b-2 border-b-[#a8a8a8] min-h-0">
            <span className="ml-[12px] text-[11.5px] leading-[16px] text-[#808080]">USDCHF,H1</span>
            <svg className="ml-auto" width="7" height="9" viewBox="0 0 7 9"><path d="M6 0v9L1 4.500z" fill="#a0a0a0" /></svg>
            <svg className="ml-[16px] mr-[9px]" width="7" height="9" viewBox="0 0 7 9"><path d="M1 0v9l5-4.500z" fill="#a0a0a0" /></svg>
          </div>
        </div>
      </div>
      <Terminal />
      {/* status bar */}
      <div className="h-[23px] flex items-center border-t-2 border-[#a8a8a8] text-[11px] text-[#111] shrink-0 mt-[5px]">
        <span className="w-[672px] pl-[2px] text-[11.3px]">Für Hilfe,F1 drücken</span>
        <div className="w-[129px] h-full border-l border-[#a8a8a8] pl-[6px] leading-[21px]">Market Overview</div>
        <div className="w-[97px] h-full border-l border-[#a8a8a8]" />
        <div className="w-[71px] h-full border-l border-[#a8a8a8]" />
        <div className="w-[71px] h-full border-l border-[#a8a8a8]" />
        <div className="w-[69px] h-full border-l border-[#a8a8a8]" />
        <div className="w-[70px] h-full border-l border-[#a8a8a8]" />
        <div className="w-[66px] h-full border-l border-[#a8a8a8]" />
        <div className="h-full flex items-center border-l border-[#a8a8a8] pl-[4px]">
          <svg width="16" height="18" viewBox="0 0 16 18"><rect x="1" y="1" width="9" height="16" rx="1" fill="#2f8fe0" stroke="#1b6fc2" /><circle cx="11" cy="13" r="4" fill="#2fa02f" stroke="#fff" strokeWidth="0.6" /></svg>
          <span className="ml-[4px]">27.9 / 0.0 Mb</span>
        </div>
      </div>
      <PropsDialog />
    </div>
  )
}
